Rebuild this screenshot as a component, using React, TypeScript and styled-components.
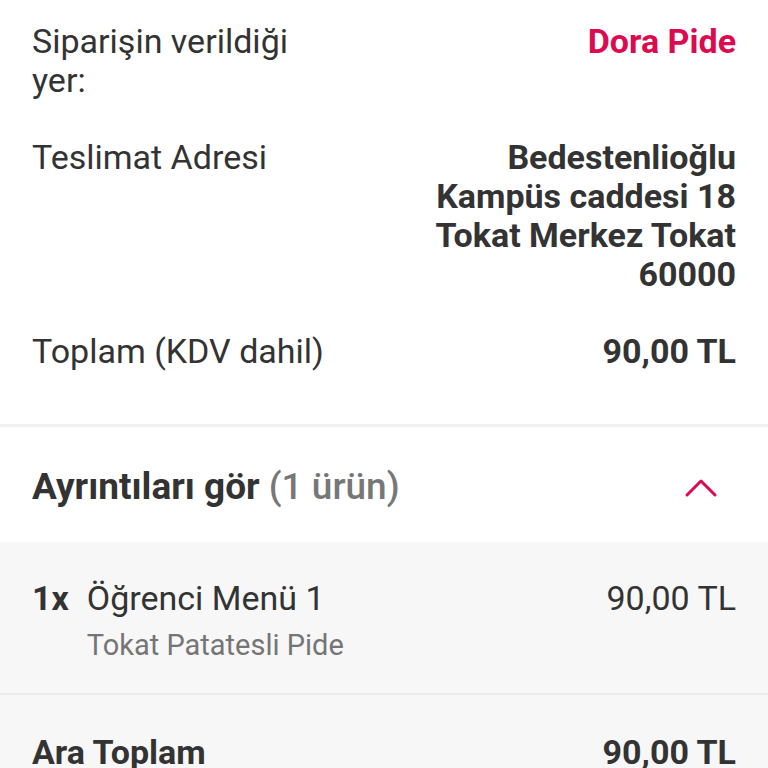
import * as React from 'react';
import styled, { createGlobalStyle } from 'styled-components';

const GlobalStyle = createGlobalStyle`
  html, body {
    margin: 0;
    padding: 0;
    background: #ffffff;
  }
  body {
    font-family: Roboto, "Noto Sans", "Liberation Sans", sans-serif;
    color: #333333;
    -webkit-font-smoothing: antialiased;
  }
`;

const Page = styled.div`
  width: 768px;
  height: 768px;
  overflow: hidden;
  background: #ffffff;
`;

const Summary = styled.section`
  display: flex;
  flex-direction: column;
  gap: 38px;
  padding: 22px 32px 53px;
  border-bottom: 3px solid #f1f1f1;
`;

const InfoRow = styled.div`
  display: grid;
  grid-template-columns: 1fr 1fr;
  column-gap: 94px;
  font-size: 34px;
  line-height: 39px;
`;

const Label = styled.div`
  color: #333333;
`;

const Value = styled.div<{ $accent?: boolean }>`
  text-align: right;
  font-weight: 700;
  color: ${({ $accent }) => ($accent ? '#dc0a4f' : '#333333')};
`;

const DetailsHeader = styled.button`
  display: flex;
  align-items: center;
  justify-content: space-between;
  width: 100%;
  height: 115px;
  padding: 4px 50px 0 32px;
  border: 0;
  background: #ffffff;
  font-family: inherit;
  cursor: pointer;
`;

const HeaderTitle = styled.span`
  font-size: 37px;
  font-weight: 700;
  color: #333333;
`;

const HeaderCount = styled.span`
  font-weight: 500;
  color: #777777;
`;

const ItemList = styled.div`
  background: #f7f7f7;
`;

const ItemRow = styled.div`
  display: flex;
  align-items: flex-start;
  gap: 18px;
  padding: 36px 32px 31px;
  border-bottom: 2px solid #ececec;
`;

const Qty = styled.span`
  font-size: 34px;
  line-height: 40px;
  font-weight: 700;
  color: #333333;
`;

const ItemInfo = styled.div`
  flex: 1;
  display: flex;
  flex-direction: column;
  gap: 10px;
`;

const ItemName = styled.span`
  font-size: 34px;
  line-height: 40px;
  color: #333333;
`;

const ItemNote = styled.span`
  font-size: 29px;
  line-height: 34px;
  color: #757575;
`;

const ItemPrice = styled.span`
  font-size: 34px;
  line-height: 40px;
  color: #333333;
`;

const TotalRow = styled.div`
  display: flex;
  justify-content: space-between;
  padding: 37px 32px;
  font-size: 34px;
  line-height: 40px;
  font-weight: 700;
  color: #333333;
`;

const ChevronUp = () => (
  <svg width="34" height="22" viewBox="0 0 34 22" fill="none">
    <polyline
      points="3,19 17,5 31,19"
      stroke="#dc0a4f"
      strokeWidth="3"
      strokeLinecap="round"
      strokeLinejoin="round"
    />
  </svg>
);

const App: React.FC = () => (
  <Page>
    <GlobalStyle />
    <Summary>
      <InfoRow>
        <Label>Siparişin verildiği yer:</Label>
        <Value $accent>Dora Pide</Value>
      </InfoRow>
      <InfoRow>
        <Label>Teslimat Adresi</Label>
        <Value>Bedestenlioğlu Kampüs caddesi 18 Tokat Merkez Tokat 60000</Value>
      </InfoRow>
      <InfoRow>
        <Label>Toplam (KDV dahil)</Label>
        <Value>90,00 TL</Value>
      </InfoRow>
    </Summary>
    <DetailsHeader>
      <HeaderTitle>
        Ayrıntıları gör <HeaderCount>(1 ürün)</HeaderCount>
      </HeaderTitle>
      <ChevronUp />
    </DetailsHeader>
    <ItemList>
      <ItemRow>
        <Qty>1x</Qty>
        <ItemInfo>
          <ItemName>Öğrenci Menü 1</ItemName>
          <ItemNote>Tokat Patatesli Pide</ItemNote>
        </ItemInfo>
        <ItemPrice>90,00 TL</ItemPrice>
      </ItemRow>
      <TotalRow>
        <span>Ara Toplam</span>
        <span>90,00 TL</span>
      </TotalRow>
    </ItemList>
  </Page>
);

export default App;
